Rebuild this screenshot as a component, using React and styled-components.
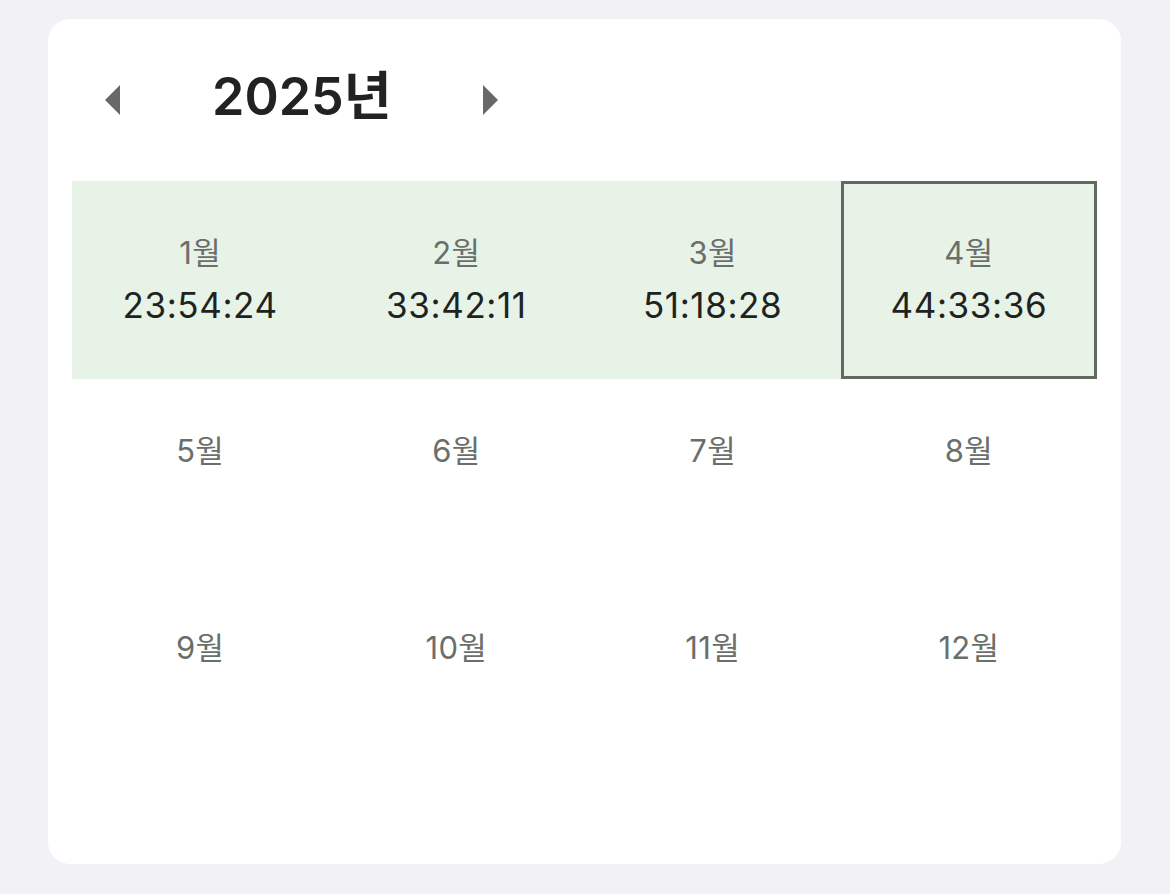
import React from "react"
import styled, { createGlobalStyle } from "styled-components"

const GlobalStyle = createGlobalStyle`
   html, body {
      margin: 0;
      padding: 0;
      background-color: #f2f1f6;
      font-family: "Inter", "Noto Sans CJK KR", sans-serif;
   }
`

const Page = styled.div`
   padding: 19px 49px 30px 48px;
`

const Card = styled.div`
   background-color: white;
   border-radius: 22px;
   padding: 0 24px 90px;
`

const Header = styled.div`
   height: 162px;
   box-sizing: border-box;
   padding: 0 0 6px 33px;
   display: flex;
   align-items: center;
`

const ArrowButton = styled.button`
   border: 0;
   background: none;
   padding: 0;
   width: 15px;
   height: 30px;
   display: flex;
   cursor: pointer;
   margin-top: 6px;
`

const Title = styled.h1`
   margin: 0 91px 0 92px;
   font-size: 52px;
   line-height: 60px;
   font-weight: 600;
   color: #222222;
   letter-spacing: 0;
`

const MonthGrid = styled.div`
   display: grid;
   grid-template-columns: repeat(4, 1fr);
   grid-auto-rows: 197.5px;
`

const MonthCell = styled.div`
   box-sizing: border-box;
   display: flex;
   flex-direction: column;
   align-items: center;
   padding-top: ${(p) => (p.$selected ? "49px" : "52px")};
   background-color: ${(p) => (p.$hasData ? "#e8f3e8" : "transparent")};
   border: ${(p) => (p.$selected ? "3px solid #646864" : "0")};
`

const MonthLabel = styled.div`
   font-size: 31px;
   line-height: 40px;
   color: #6b6f6b;
   letter-spacing: 0.3px;
`

const MonthTime = styled.div`
   margin-top: 12px;
   font-size: 35px;
   line-height: 40px;
   color: #1f231f;
   letter-spacing: 0.6px;
`

const Triangle = ({ dir }) => (
   <svg width="15" height="30" viewBox="0 0 15 30">
      {dir === "left" ? (
         <polygon points="15,0 15,30 0,15" fill="#686868" />
      ) : (
         <polygon points="0,0 0,30 15,15" fill="#686868" />
      )}
   </svg>
)

const times = {
   1: "23:54:24",
   2: "33:42:11",
   3: "51:18:28",
   4: "44:33:36",
}

const App = () => {
   const months = Array.from({ length: 12 }, (_, i) => i + 1)
   return (
      <Page>
         <GlobalStyle />
         <Card>
            <Header>
               <ArrowButton aria-label="이전 해">
                  <Triangle dir="left" />
               </ArrowButton>
               <Title>2025년</Title>
               <ArrowButton aria-label="다음 해">
                  <Triangle dir="right" />
               </ArrowButton>
            </Header>
            <MonthGrid>
               {months.map((m) => (
                  <MonthCell key={m} $hasData={!!times[m]} $selected={m === 4}>
                     <MonthLabel>{m}월</MonthLabel>
                     {times[m] && <MonthTime>{times[m]}</MonthTime>}
                  </MonthCell>
               ))}
            </MonthGrid>
         </Card>
      </Page>
   )
}

export default App
